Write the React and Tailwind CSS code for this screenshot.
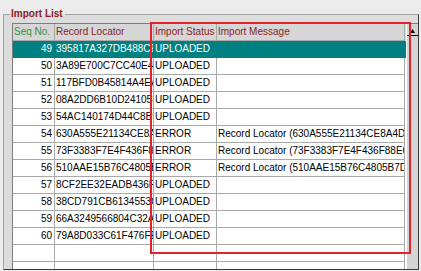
const rows = [
  { seq: 49, loc: "395817A327DB488CE7F21A0B", status: "UPLOADED", msg: "" },
  { seq: 50, loc: "3A89E700C7CC40E4B19D02AF", status: "UPLOADED", msg: "" },
  { seq: 51, loc: "117BFD0B45814A4EA07C31D2", status: "UPLOADED", msg: "" },
  { seq: 52, loc: "08A2DD6B10D241058C7E90B1", status: "UPLOADED", msg: "" },
  { seq: 53, loc: "54AC140174D44C8B9E12F0A3", status: "UPLOADED", msg: "" },
  { seq: 54, loc: "630A555E21134CE8A4D0B7E2", status: "ERROR", msg: "Record Locator (630A555E21134CE8A4D0B7E2) already exists" },
  { seq: 55, loc: "73F3383F7E4F436F88E6C1A9", status: "ERROR", msg: "Record Locator (73F3383F7E4F436F88E6C1A9) already exists" },
  { seq: 56, loc: "510AAE15B76C4805B7D3E4F8", status: "ERROR", msg: "Record Locator (510AAE15B76C4805B7D3E4F8) already exists" },
  { seq: 57, loc: "8CF2EE32EADB436F0A19C5D7", status: "UPLOADED", msg: "" },
  { seq: 58, loc: "38CD791CB6134553C2E8A0F4", status: "UPLOADED", msg: "" },
  { seq: 59, loc: "66A3249566804C32AD5B71E0", status: "UPLOADED", msg: "" },
  { seq: 60, loc: "79A8D033C61F476FE4A20B9C", status: "UPLOADED", msg: "" },
  { seq: "", loc: "", status: "", msg: "" },
  { seq: "", loc: "", status: "", msg: "" },
];

const Row = ({ row, selected }) => {
  const line = selected ? "border-[#008080]" : "border-[#a9a9a9]";
  const base = `h-[17px] shrink-0 border-b border-r ${line} overflow-hidden whitespace-nowrap leading-[16px]`;
  return (
    <div className={`flex ${selected ? "bg-[#008080] text-white" : "bg-white text-black"}`}>
      <div className={`${base} w-[42px] text-right pr-[2px]`}>{row.seq}</div>
      <div className={`${base} w-[99px] pl-[1px]`}>{row.loc}</div>
      <div className={`${base} w-[63px] pl-[1px]`}>{row.status}</div>
      <div className={`${base} w-[188px] pl-[1px]`}>{row.msg}</div>
    </div>
  );
};

export default function App() {
  return (
    <div
      className="relative w-[421px] h-[271px] bg-[#ececec] pl-[3px] pt-[8px] overflow-hidden text-[10px]"
      style={{ fontFamily: '"Liberation Sans", Arial, sans-serif' }}
    >
      <fieldset className="w-[415px] h-[262px] bg-[#dcdcdc] border border-[#a4a4a4] border-r-[#3a3a3a] border-b-[#3a3a3a] overflow-hidden">
        <legend className="ml-[6px] px-[1px] pr-[2px] text-[10px] leading-[12px] font-bold text-[#8b1c1c]">
          Import List
        </legend>
        <div className="mt-[3px] ml-[8px] flex h-[246px] border-t border-l border-[#7c7c7c]">
          <div className="w-[393px] flex flex-col overflow-hidden">
            <div className="flex bg-[#d6d6d6] leading-[16px]">
              <div className="h-[17px] w-[42px] border-b border-r border-[#a9a9a9] pl-[1px] text-[#3d8b3d]">Seq No.</div>
              <div className="h-[17px] w-[99px] border-b border-r border-[#a9a9a9] pl-[1px] text-[#8b2323]">Record Locator</div>
              <div className="h-[17px] w-[63px] border-b border-r border-[#a9a9a9] pl-[1px] text-[#8b2323] whitespace-nowrap overflow-hidden">Import Status</div>
              <div className="h-[17px] w-[188px] border-b border-r border-[#a9a9a9] pl-[1px] text-[#8b2323]">Import Message</div>
            </div>
            {rows.map((row, i) => (
              <Row key={i} row={row} selected={i === 0} />
            ))}
          </div>
          <div className="w-[12px] h-full bg-[#d4d4d4] border-l border-white flex flex-col">
            <div className="h-[12px] border-b border-black flex items-end justify-center pb-[2px]">
              <svg width="5" height="4" viewBox="0 0 5 4">
                <polygon points="2.5,0 5,4 0,4" fill="#000" />
              </svg>
            </div>
          </div>
        </div>
      </fieldset>
      <div className="absolute left-[150px] top-[22px] w-[261px] h-[232px] border-2 border-[#e3222a]" />
    </div>
  );
}
